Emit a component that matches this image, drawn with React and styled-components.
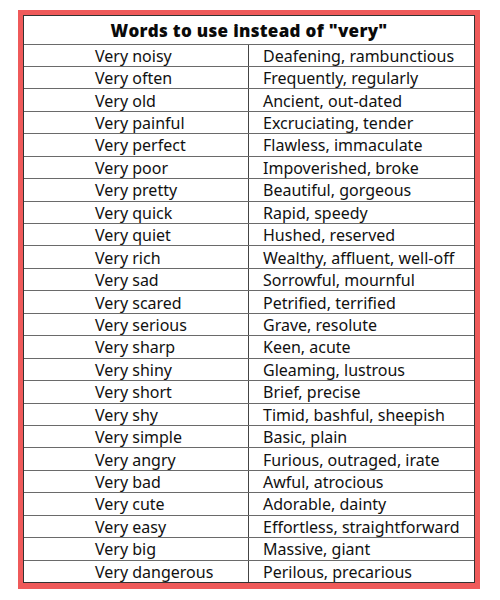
import React from "react";
import styled, { createGlobalStyle } from "styled-components";

const GlobalStyle = createGlobalStyle`
  * {
    margin: 0;
    padding: 0;
    box-sizing: border-box;
  }

  body, html {
    background-color: #ffffff;
    font-family: "Noto Sans", "Open Sans", sans-serif;
    color: #111;
  }
`;

const Page = styled.div`
  padding: 10px 0 0 18px;
`;

const Frame = styled.div`
  width: 462px;
  border: 5px solid #ef5a5a;
  border-top-width: 5.5px;
  border-bottom-width: 6px;
  background-color: #ffffff;
`;

const Table = styled.div`
  display: flex;
  flex-direction: column;
  border: 1.5px solid #333;
`;

const Title = styled.div`
  height: 27.5px;
  display: flex;
  align-items: center;
  justify-content: center;
  padding-top: 2px;
  font-family: "Open Sans", "Noto Sans", sans-serif;
  font-weight: 800;
  font-size: 17px;
  letter-spacing: 0.3px;
  color: #0a0a0a;
`;

const Row = styled.div`
  display: grid;
  grid-template-columns: 224px 1fr;
  height: 22.45px;
  border-top: 1.5px solid #6a6a6a;
`;

const Cell = styled.div`
  display: flex;
  align-items: center;
  padding-left: ${(p) => p.$indent}px;
  padding-top: 1px;
  font-size: 16px;
  line-height: 1;
  white-space: nowrap;
  border-left: ${(p) => (p.$divider ? "1.5px solid #444" : "none")};
`;

const words = [
  ["Very noisy", "Deafening, rambunctious"],
  ["Very often", "Frequently, regularly"],
  ["Very old", "Ancient, out-dated"],
  ["Very painful", "Excruciating, tender"],
  ["Very perfect", "Flawless, immaculate"],
  ["Very poor", "Impoverished, broke"],
  ["Very pretty", "Beautiful, gorgeous"],
  ["Very quick", "Rapid, speedy"],
  ["Very quiet", "Hushed, reserved"],
  ["Very rich", "Wealthy, affluent, well-off"],
  ["Very sad", "Sorrowful, mournful"],
  ["Very scared", "Petrified, terrified"],
  ["Very serious", "Grave, resolute"],
  ["Very sharp", "Keen, acute"],
  ["Very shiny", "Gleaming, lustrous"],
  ["Very short", "Brief, precise"],
  ["Very shy", "Timid, bashful, sheepish"],
  ["Very simple", "Basic, plain"],
  ["Very angry", "Furious, outraged, irate"],
  ["Very bad", "Awful, atrocious"],
  ["Very cute", "Adorable, dainty"],
  ["Very easy", "Effortless, straightforward"],
  ["Very big", "Massive, giant"],
  ["Very dangerous", "Perilous, precarious"],
];

const App = () => {
  return (
    <>
      <GlobalStyle />
      <Page>
        <Frame>
          <Table>
            <Title>Words to use instead of "very"</Title>
            {words.map(([plain, better]) => (
              <Row key={plain}>
                <Cell $indent={71}>{plain}</Cell>
                <Cell $indent={14} $divider>
                  {better}
                </Cell>
              </Row>
            ))}
          </Table>
        </Frame>
      </Page>
    </>
  );
};

export default App;
